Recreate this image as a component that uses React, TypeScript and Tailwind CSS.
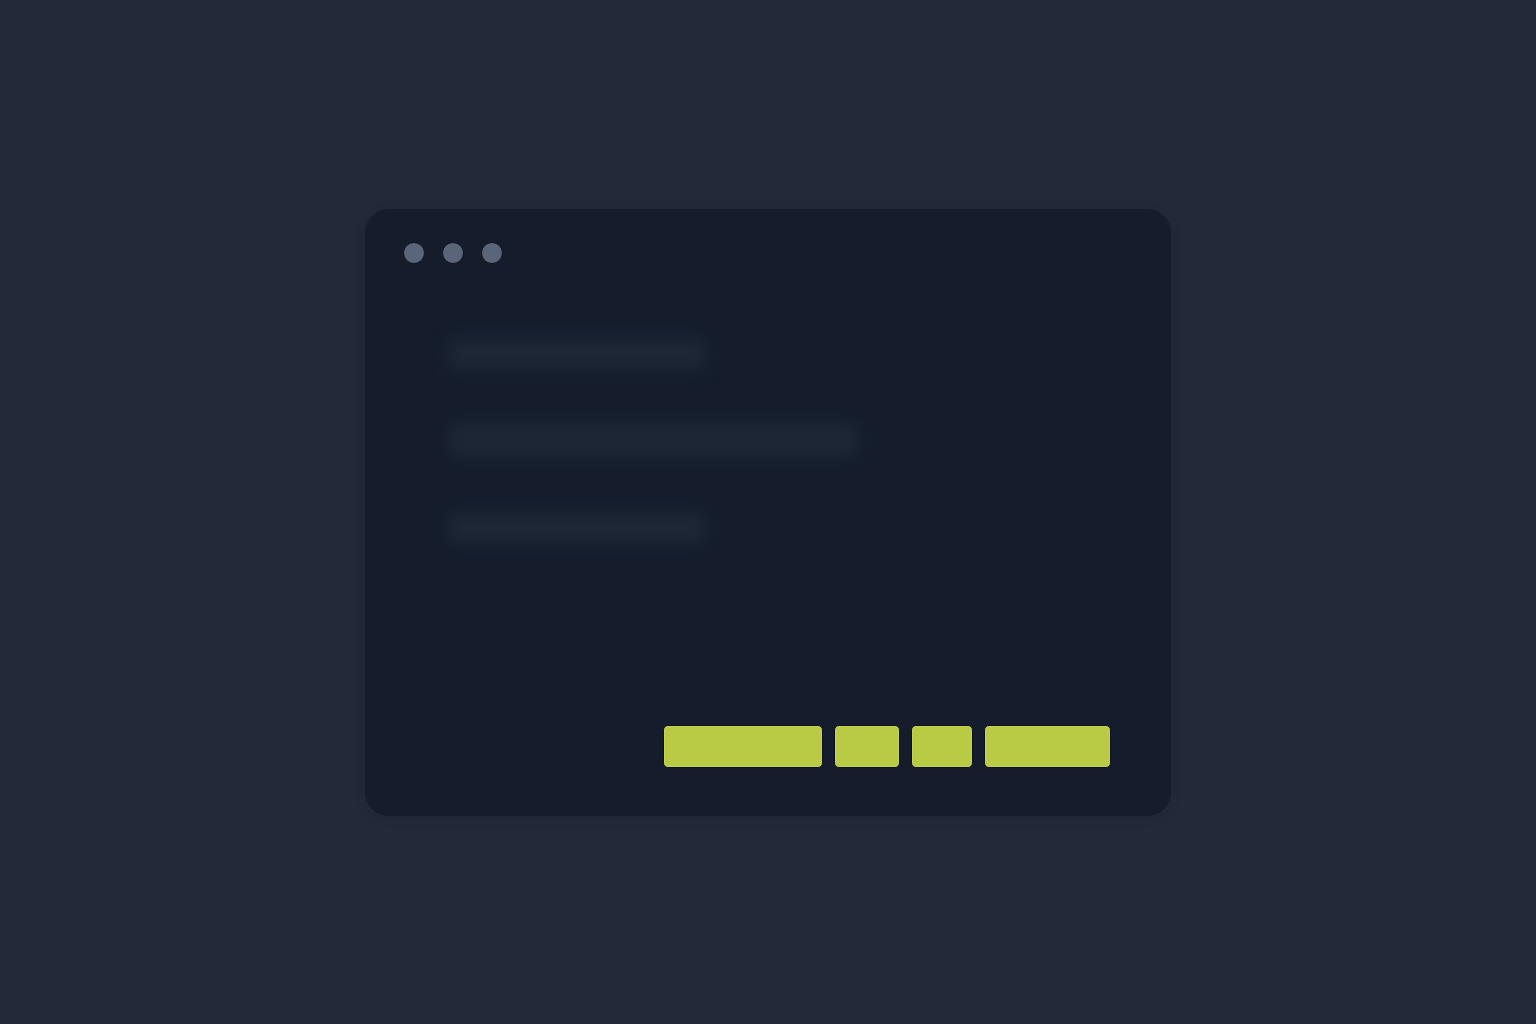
export default function App() {
  const buttons = [160, 66, 62, 127];
  return (
    <div className="w-full h-screen bg-[#222a3a] flex items-center justify-center">
      <div className="w-[806px] h-[607px] bg-[#151d2d] rounded-[24px] shadow-[0_2px_12px_rgba(0,0,0,0.12)] flex flex-col pt-[33px]">
        <div className="flex gap-[17px] pl-[38px]">
          <div className="w-[22px] h-[22px] rounded-full bg-[#5b6579] border border-[#0f1522]" />
          <div className="w-[22px] h-[22px] rounded-full bg-[#5b6579] border border-[#0f1522]" />
          <div className="w-[22px] h-[22px] rounded-full bg-[#5b6579] border border-[#0f1522]" />
        </div>
        <div className="flex flex-col pl-[84px] mt-[75px]">
          <div className="w-[256px] h-[30px] bg-[#1f2737] blur-[8px] rounded-md" />
          <div className="w-[408px] h-[32px] bg-[#1f2737] blur-[8px] rounded-md mt-[55px]" />
          <div className="w-[256px] h-[30px] bg-[#1f2737] blur-[8px] rounded-md mt-[57px]" />
        </div>
        <div className="mt-auto flex justify-end gap-[11px] pr-[60px] pb-[48px]">
          {buttons.map((w, i) => (
            <div
              key={i}
              className="h-[43px] bg-[#b9cb45] rounded-[5px] border border-[#0b1020] ring-1 ring-[#d2e05a]/40 ring-inset"
              style={{ width: w }}
            />
          ))}
        </div>
      </div>
    </div>
  );
}
